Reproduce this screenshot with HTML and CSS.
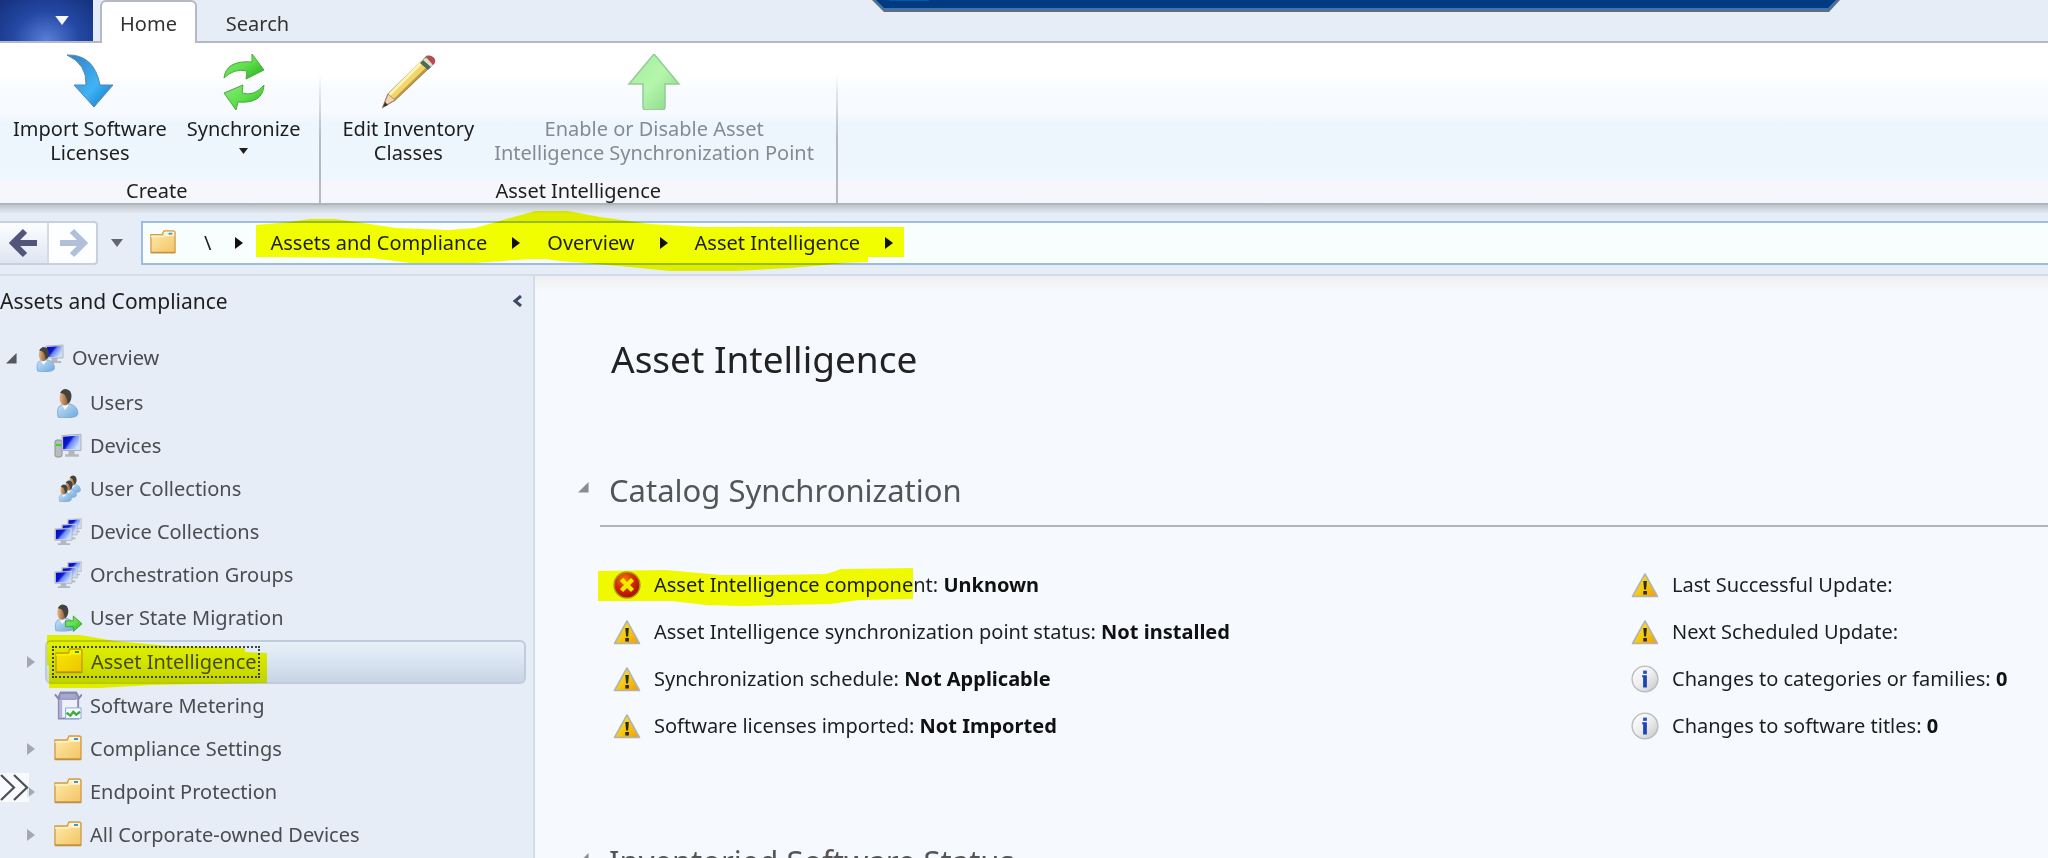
FILE: index.html
```html
<!DOCTYPE html>
<html lang="en">
<head>
<meta charset="utf-8">
<title>Asset Intelligence</title>
<meta name="viewport" content="width=device-width, initial-scale=1">
<link rel="stylesheet" href="styles.css">
</head>
<body>
<svg class="defs" width="0" height="0" aria-hidden="true">
  <defs>
    <linearGradient id="gBlue" x1="0" y1="0" x2="1" y2="1"><stop offset="0" stop-color="#2f7fc4"/><stop offset=".6" stop-color="#3fb4f4"/><stop offset="1" stop-color="#0d6fc4"/></linearGradient>
    <linearGradient id="gGreen" x1="0" y1="0" x2="1" y2="1"><stop offset="0" stop-color="#8ae87c"/><stop offset=".5" stop-color="#5fe04c"/><stop offset="1" stop-color="#25a81a"/></linearGradient>
    <linearGradient id="gPale" x1="0" y1="0" x2="1" y2="1"><stop offset="0" stop-color="#a4eca0"/><stop offset=".5" stop-color="#b4f6ac"/><stop offset="1" stop-color="#84d284"/></linearGradient>
    <linearGradient id="gFolder" x1="0" y1="0" x2="1" y2="1"><stop offset="0" stop-color="#ffebaa"/><stop offset="1" stop-color="#f3c466"/></linearGradient>
    <linearGradient id="gScreen" x1="0" y1="0" x2="1" y2=".6"><stop offset="0" stop-color="#0808a8"/><stop offset=".45" stop-color="#0a18d8"/><stop offset=".6" stop-color="#6c8cf4"/><stop offset="1" stop-color="#c8dcff"/></linearGradient>
    <linearGradient id="gBody" x1="0" y1="0" x2="1" y2="1"><stop offset="0" stop-color="#c8e2f8"/><stop offset="1" stop-color="#6ca6dc"/></linearGradient>
    <linearGradient id="gFace" x1="0" y1="0" x2="1" y2="0"><stop offset="0" stop-color="#e8b888"/><stop offset="1" stop-color="#7c4a28"/></linearGradient>
    <linearGradient id="gWarn" x1="0" y1="0" x2="1" y2="1"><stop offset="0" stop-color="#f8f020"/><stop offset=".5" stop-color="#f6cc14"/><stop offset="1" stop-color="#f09a08"/></linearGradient>
    <radialGradient id="gErr" cx=".4" cy=".3" r=".7"><stop offset="0" stop-color="#f88450"/><stop offset=".5" stop-color="#dc2c14"/><stop offset="1" stop-color="#b00c08"/></radialGradient>
    <linearGradient id="gInfo" x1="0" y1="0" x2="1" y2="1"><stop offset="0" stop-color="#ffffff"/><stop offset=".5" stop-color="#eeeeee"/><stop offset="1" stop-color="#c4c4c4"/></linearGradient>
    <symbol id="folder" viewBox="0 0 28 28">
      <path d="M1 5h12l2-4h10q2 0 2 2v21H1z" fill="url(#gFolder)" stroke="#cf9f4c" stroke-width="1.4"/>
      <path d="M15 2h11v4H15z" fill="#fff4d0"/><path d="M20 3h4v2h-4z" fill="#3c94dc"/>
      <path d="M1 7h13l2-1h10" fill="none" stroke="#fff3c4" stroke-width="1.4"/>
      <path d="M1 24.500h26" stroke="#bd8f45" stroke-width="1.500"/>
    </symbol>
    <symbol id="person" viewBox="0 0 28 30">
      <path d="M4 29Q2 18 8 17l8-1q8 2 8 10-1 3-7 3.500Q8 31 4 29z" fill="url(#gBody)" stroke="#7aa4cc" stroke-width=".8"/>
      <path d="M8 17l3 5 4-5z" fill="#f4faff"/>
      <ellipse cx="10.500" cy="10" rx="5" ry="7.500" fill="url(#gFace)"/>
      <path d="M6 5Q10-2 16 3q3 5 0 11l-2 2q-1-6-3-9-2-2-5-2z" fill="#444240"/>
    </symbol>
    <symbol id="monitor" viewBox="0 0 20 20" preserveAspectRatio="none">
      <path d="M7 14h6v3h4v2H4v-2h3z" fill="#b4b8bc"/>
      <path d="M1 2l18-1v13H1z" fill="#d8dce4" stroke="#a8acb8" stroke-width=".8"/>
      <path d="M2 3l15.500-1v11H2z" fill="url(#gScreen)"/>
    </symbol>
    <symbol id="overview" viewBox="0 0 28 28">
      <use href="#monitor" x="9" y="0" width="19" height="20"/><use href="#person" x="-2" y="2" width="24" height="26"/>
    </symbol>
    <symbol id="device" viewBox="0 0 28 28">
      <rect x="1" y="8" width="7" height="17" rx="2" fill="#b8bcbc" stroke="#8c9090"/><path d="M2 12h5v2H2z" fill="#34dc20"/>
      <use href="#monitor" x="7" y="1" width="21" height="25"/>
    </symbol>
    <symbol id="people" viewBox="0 0 28 28">
      <use href="#person" x="12" y="0" width="17" height="18"/><use href="#person" x="8" y="5" width="17" height="18"/><use href="#person" x="3" y="9" width="17" height="18"/>
    </symbol>
    <symbol id="devices" viewBox="0 0 28 28">
      <use href="#monitor" x="13" y="0" width="15" height="15"/><use href="#monitor" x="7" y="5" width="17" height="17"/><use href="#monitor" x="0" y="9" width="19" height="19"/>
    </symbol>
    <symbol id="migrate" viewBox="0 0 29 30">
      <use href="#person" x="-2" y="0" width="27" height="29"/>
      <path d="M12 18h8v-5l9 8-9 8v-5h-8z" fill="url(#gGreen)" stroke="#3ba832"/>
    </symbol>
    <symbol id="meter" viewBox="0 0 29 30">
      <path d="M5 5l2-4h16l2 4v23H5z" fill="#f0f0fa" stroke="#8c8cb8" stroke-width="2"/>
      <path d="M6 2h17v6H6z" fill="#a8a8cc" stroke="#8484b0"/><path d="M5 8L1 3M25 8l4-5" stroke="#8484b0" stroke-width="2"/>
      <path d="M7 9v18" stroke="#b4b4d8" stroke-width="3"/>
      <path d="M12 17h16v11H12z" fill="#f4faff" stroke="#88a8d4"/><path d="M13 22l4 3 3-4 3 3 4-3" fill="none" stroke="#44ac38" stroke-width="2.500"/>
    </symbol>
    <symbol id="warn" viewBox="0 0 28 26">
      <path d="M14 2L26.500 24.500h-25z" fill="url(#gWarn)" stroke="#b4b4ac" stroke-width="1.600" stroke-linejoin="round"/>
      <path d="M12.300 9h3.600l-.8 8.500h-2z" fill="#2c2a10"/><rect x="12.300" y="19" width="3.600" height="3.500" fill="#2c2a10"/>
    </symbol>
    <symbol id="error" viewBox="0 0 28 28">
      <circle cx="14" cy="14" r="13" fill="url(#gErr)" stroke="#b0a494" stroke-width="1.400"/>
      <path d="M8.500 8.500l11 11M19.500 8.500l-11 11" stroke="#f6ecec" stroke-width="4.400"/>
    </symbol>
    <symbol id="info" viewBox="0 0 30 30">
      <circle cx="15" cy="15" r="13.800" fill="url(#gInfo)" stroke="#bcbcbc" stroke-width="1.500"/>
      <rect x="13" y="6" width="4" height="3.500" fill="#2450c4"/><path d="M12 11h5v13h-4V13h-1z" fill="#1c44b8"/>
    </symbol>
    <symbol id="right" viewBox="0 0 8 14"><path d="M0 1l8 6-8 6z" fill="currentColor"/></symbol>
    <symbol id="down" viewBox="0 0 12 8"><path d="M0 0h12L6 8z" fill="currentColor"/></symbol>
    <symbol id="open" viewBox="0 0 12 12"><path d="M11.500 0v11.500H0z" fill="currentColor"/></symbol>
  </defs>
</svg>

<header class="tabs">
  <button class="app-menu" aria-label="Application menu"><svg width="14" height="9"><use href="#down"/></svg></button>
  <button class="tab tab-active">Home</button>
  <button class="tab">Search</button>
  <svg class="session-bar" width="968" height="13" viewBox="0 0 968 13" aria-hidden="true">
    <path d="M0 0h968l-11 12H12z" fill="#646c74"/><path d="M2 0h964l-9 10H12z" fill="#3c74b4"/><path d="M4 0h960l-8 8H12z" fill="#003a80"/><path d="M17 0h40v1H17z" fill="#0454a8"/>
  </svg>
</header>

<section class="ribbon" aria-label="Ribbon">
  <div class="group">
    <div class="group-tools">
      <button class="tool">
        <svg width="56" height="56" viewBox="0 0 56 56"><path d="M5 1Q32 0 38 31h13L32 53 12 31h12Q25 10 5 1z" fill="url(#gBlue)" stroke="#5a88ac" stroke-width="1"/></svg>
        <span>Import Software<br>Licenses</span>
      </button>
      <button class="tool">
        <svg width="56" height="56" viewBox="0 0 56 56"><path d="M8 24Q10 6 36 8V0l12 16-18 9 1-8Q18 14 8 24z" fill="url(#gGreen)" stroke="#49a93f" stroke-width="1"/><path d="M48 31Q47 50 22 48l-2 8L8 39l19-8-1 8q12 4 22-8z" fill="url(#gGreen)" stroke="#49a93f" stroke-width="1"/></svg>
        <span>Synchronize</span>
        <svg class="tool-caret" width="9" height="6"><use href="#down"/></svg>
      </button>
    </div>
    <div class="group-name">Create</div>
  </div>
  <div class="group group-wide">
    <div class="group-tools">
      <button class="tool">
        <svg width="56" height="56" viewBox="0 0 56 56"><path d="M3 53l5-13L47 2q8 0 7 7L15 46z" fill="#f2d66c" stroke="#8c7440" stroke-width="1.200"/><path d="M9 41L44 6" stroke="#fff6b0" stroke-width="3"/><path d="M14 46L50 11" stroke="#c49a40" stroke-width="2"/><path d="M3 53l5-13 7 6z" fill="#f4d4b0" stroke="#a07c58" stroke-width=".8"/><path d="M3 53l2-5 3 3z" fill="#333"/><path d="M40 9l4-4 8 7-4 4z" fill="#4c6c54"/><path d="M43 6l2-2 8 7-2 2z" fill="#d8e0d8"/><path d="M46 3q3-3 7 0t1 7l-1 1z" fill="#b8485c"/></svg>
        <span>Edit Inventory<br>Classes</span>
      </button>
      <button class="tool" disabled>
        <svg width="56" height="56" viewBox="0 0 56 56"><path d="M28 0L53 30H39v23q0 3-3 3H20q-3 0-3-3V30H3z" fill="url(#gPale)" stroke="#94cc94" stroke-width="1.500"/></svg>
        <span>Enable or Disable Asset<br>Intelligence Synchronization Point</span>
      </button>
    </div>
    <div class="group-name">Asset Intelligence</div>
  </div>
</section>

<nav class="address-row" aria-label="Address">
  <div class="history">
    <button aria-label="Back"><svg width="30" height="32" viewBox="0 0 30 32"><path d="M28 16H6M16 4L4 16l12 12" fill="none" stroke="#52567a" stroke-width="6"/></svg></button>
    <button aria-label="Forward"><svg width="30" height="32" viewBox="0 0 30 32"><path d="M2 16h22M14 4l12 12-12 12" fill="none" stroke="#b0c0d8" stroke-width="6"/></svg></button>
  </div>
  <button class="recent" aria-label="Recent locations"><svg width="12" height="8"><use href="#down"/></svg></button>
  <div class="address">
    <svg class="address-icon" width="26" height="26"><use href="#folder"/></svg>
    <span class="root">\</span>
    <svg class="sep" width="8" height="14"><use href="#right"/></svg>
    <a href="#">Assets and Compliance</a>
    <svg class="sep" width="8" height="14"><use href="#right"/></svg>
    <a href="#">Overview</a>
    <svg class="sep" width="8" height="14"><use href="#right"/></svg>
    <a href="#">Asset Intelligence</a>
    <svg class="sep" width="8" height="14"><use href="#right"/></svg>
  </div>
  <svg class="marker marker-address" width="648" height="62" viewBox="256 210 648 62" aria-hidden="true"><path d="M256 225L290 222 310 219H335L370 224 396 228 448 230 475 228 510 218 535 211H568L600 217 650 224 700 227H904V257H868V262L846 263 790 268 735 271H670L620 266 560 261 545 259H530L475 263H410L372 258 256 257z" fill="#f8ff00"/></svg>
</nav>

<div class="workspace">
  <aside class="sidebar">
    <div class="sidebar-head"><h2>Assets and Compliance</h2><button aria-label="Collapse pane"><svg width="10" height="12" viewBox="0 0 10 12"><path d="M9 1L3 6l6 5" fill="none" stroke="#3c4a66" stroke-width="3"/></svg></button></div>
    <ul class="tree">
      <li class="node node-root"><svg class="toggle toggle-open" width="11" height="11"><use href="#open"/></svg><a href="#"><svg width="28" height="28"><use href="#overview"/></svg>Overview</a></li>
      <li class="node"><a href="#"><svg width="28" height="30"><use href="#person"/></svg>Users</a></li>
      <li class="node"><a href="#"><svg width="28" height="28"><use href="#device"/></svg>Devices</a></li>
      <li class="node"><a href="#"><svg width="28" height="28"><use href="#people"/></svg>User Collections</a></li>
      <li class="node"><a href="#"><svg width="28" height="28"><use href="#devices"/></svg>Device Collections</a></li>
      <li class="node"><a href="#"><svg width="28" height="28"><use href="#devices"/></svg>Orchestration Groups</a></li>
      <li class="node"><a href="#"><svg width="28" height="30"><use href="#migrate"/></svg>User State Migration</a></li>
      <li class="node node-selected"><svg class="toggle" width="8" height="14"><use href="#right"/></svg><a href="#"><svg width="28" height="28"><use href="#folder"/></svg>Asset Intelligence</a>
        <svg class="marker marker-node" width="220" height="54" viewBox="47 633 220 54" aria-hidden="true"><path d="M47 634H80L115 640 170 645 245 647V651L267 652V682L200 683 150 684 100 687H49V665L47 664z" fill="#f8ff00"/></svg></li>
      <li class="node"><a href="#"><svg width="28" height="30"><use href="#meter"/></svg>Software Metering</a></li>
      <li class="node"><svg class="toggle" width="8" height="14"><use href="#right"/></svg><a href="#"><svg width="28" height="28"><use href="#folder"/></svg>Compliance Settings</a></li>
      <li class="node"><svg class="toggle" width="8" height="14"><use href="#right"/></svg><a href="#"><svg width="28" height="28"><use href="#folder"/></svg>Endpoint Protection</a>
        <button class="expander" aria-label="Expand"><svg width="29" height="29" viewBox="0 0 29 29"><path d="M1 2l13 12.500L1 27M14 2l13 12.500L14 27" fill="none" stroke="#4c5054" stroke-width="2.200"/></svg></button></li>
      <li class="node"><svg class="toggle" width="8" height="14"><use href="#right"/></svg><a href="#"><svg width="28" height="28"><use href="#folder"/></svg>All Corporate-owned Devices</a></li>
    </ul>
  </aside>

  <main class="content">
    <h1>Asset Intelligence</h1>
    <section class="panel">
      <h2><svg width="11" height="11"><use href="#open"/></svg>Catalog Synchronization</h2>
      <div class="status">
        <ul>
          <li><svg width="28" height="28"><use href="#error"/></svg><span>Asset Intelligence component: <b>Unknown</b></span>
            <svg class="marker marker-status" width="315" height="38" viewBox="597 568 315 38" aria-hidden="true"><path d="M597 571L665 570 720 575H770L825 574 840 569 912 568V599L857 600 830 604 740 606 705 605 670 601H597z" fill="#f8ff00"/></svg></li>
          <li><svg width="28" height="26"><use href="#warn"/></svg><span>Asset Intelligence synchronization point status: <b>Not installed</b></span></li>
          <li><svg width="28" height="26"><use href="#warn"/></svg><span>Synchronization schedule: <b>Not Applicable</b></span></li>
          <li><svg width="28" height="26"><use href="#warn"/></svg><span>Software licenses imported: <b>Not Imported</b></span></li>
        </ul>
        <ul>
          <li><svg width="28" height="26"><use href="#warn"/></svg><span>Last Successful Update:</span></li>
          <li><svg width="28" height="26"><use href="#warn"/></svg><span>Next Scheduled Update:</span></li>
          <li><svg width="28" height="30"><use href="#info"/></svg><span>Changes to categories or families: <b>0</b></span></li>
          <li><svg width="28" height="30"><use href="#info"/></svg><span>Changes to software titles: <b>0</b></span></li>
        </ul>
      </div>
    </section>
    <section class="panel">
      <h2><svg width="11" height="11"><use href="#open"/></svg>Inventoried Software Status</h2>
    </section>
  </main>
</div>
</body>
</html>
```

FILE: styles.css
```css
* { box-sizing: border-box; }

body {
  margin: 0;
  height: 100vh;
  overflow: hidden;
  display: flex;
  flex-direction: column;
  background: #e6edf7;
  color: #1e1e1e;
  font: 20px/24px "Noto Sans", "Open Sans", sans-serif;
}

button {
  margin: 0;
  padding: 0;
  border: 0;
  background: none;
  color: inherit;
  font: inherit;
}

a { color: inherit; text-decoration: none; }
ul { margin: 0; padding: 0; list-style: none; }
h1, h2 { margin: 0; font-weight: 400; }
svg { display: block; flex: none; }
.defs { position: absolute; }

/* Highlighter strokes tint whatever they lie over */
.marker {
  position: absolute;
  mix-blend-mode: multiply;
  pointer-events: none;
}

/* Tab strip */
.tabs {
  position: relative;
  flex: none;
  display: flex;
  height: 43px;
  border-bottom: 2px solid #b4b9c4;
}

.app-menu {
  width: 93px;
  margin-right: 7px;
  padding-left: 31px;
  display: flex;
  align-items: center;
  justify-content: center;
  background: radial-gradient(ellipse at 50% 100%, #5a80dc 0, #2448a4 50%, #14307c 100%);
  color: #f4f6fa;
}

.tab {
  width: 97px;
  height: 43px;
  padding-top: 4px;
  color: #333;
}

.tab + .tab { margin-left: 12px; }

.tab-active {
  border: 2px solid #b4b9c4;
  border-bottom: 0;
  border-radius: 6px 6px 0 0;
  background: #fff;
  padding-top: 2px;
}

.session-bar { position: absolute; left: 872px; top: 0; }

/* Ribbon */
.ribbon {
  flex: none;
  display: flex;
  height: 162px;
  border-bottom: 2px solid #b0b4b8;
  background: linear-gradient(#fff 20%, #f7faff 30%, #f7faff 44%, #eef6fd 50%, #eef6fe 84%, #f6f7fc 86%);
}

.group {
  display: flex;
  flex-direction: column;
  justify-content: space-between;
  padding: 11px 18px 0 13px;
  border-right: 2px solid;
  border-image: linear-gradient(transparent 20%, #b4bac0 60%) 1;
}

.group-wide { padding: 11px 22px 0; }

.group-tools { display: flex; gap: 20px; }

.tool {
  display: flex;
  flex-direction: column;
  align-items: center;
  gap: 7px;
}

.tool:disabled { color: #858a94; }
.group-name { text-align: center; }

/* Address row */
.address-row {
  position: relative;
  z-index: 1;
  flex: none;
  display: flex;
  height: 71px;
  padding: 16px 0 9px;
  border-bottom: 2px solid #d2dcea;
  background: linear-gradient(#c0c5cc, #e6edf7 9px);
}

.history {
  display: flex;
  width: 98px;
  border: 2px solid #c8d0dc;
  border-left: 0;
  border-radius: 0 4px 4px 0;
  background: #fdfeff;
}

.history button {
  flex: 1;
  display: flex;
  align-items: center;
  justify-content: center;
}

.history button:first-child {
  border-right: 2px solid #d4dae6;
  background: linear-gradient(#fcfdff, #dfe6f2);
}

.recent { padding: 0 18px 0 13px; color: #62666e; }

.address {
  flex: 1;
  display: flex;
  align-items: center;
  padding-left: 7px;
  border: 2px solid #9cbde0;
  border-right: 0;
  background: #f8fefe;
}

.root { margin: 0 24px 0 28px; }
.address a { margin: 0 25px 0 27px; }
.sep { color: #111; }
.marker-address { left: 256px; top: 5px; }

/* Workspace */
.workspace { flex: 1; min-height: 0; display: flex; }

.sidebar {
  flex: none;
  width: 535px;
  border-right: 2px solid #d2dde9;
}

.sidebar-head {
  display: flex;
  align-items: center;
  justify-content: space-between;
  height: 59px;
  padding: 0 11px 9px 0;
}

.sidebar-head h2 { font-size: 21px; line-height: 24px; }

.node {
  position: relative;
  display: flex;
  align-items: center;
  height: 43px;
  padding-left: 52px;
  color: #4a4c50;
}

.node a { display: flex; align-items: center; gap: 8px; padding: 2px; }
.node-root { height: 46px; padding-left: 34px; }
.toggle { position: absolute; left: 27px; color: #a4a8b0; }
.toggle-open { left: 6px; color: #55585e; }

.node-selected {
  height: 44px;
  margin: 1px 7px 0 45px;
  padding-left: 7px;
  border: 2px solid #c0cbdd;
  border-radius: 6px;
  background: linear-gradient(#e8f0f8, #dbe7f4 40%, #d3ddec 70%, #c8d4e4);
}

.node-selected a { padding: 0 1px; outline: 2px dotted #444; }
.node-selected .toggle { left: -20px; }
.marker-node { left: 0; top: -8px; }

.expander {
  position: absolute;
  left: 0;
  top: 3px;
  background: rgba(255, 255, 255, .7);
}

/* Main pane */
.content {
  flex: 1;
  min-width: 0;
  padding-left: 43px;
  background: linear-gradient(#eeefef, #f6faff 16px);
}

h1 {
  padding: 58px 0 0 33px;
  font-size: 37px;
  line-height: 50px;
  color: #222;
}

.panel h2 {
  display: flex;
  align-items: center;
  gap: 20px;
  font-size: 31px;
  line-height: 48px;
  color: #555;
}

.panel h2 svg { color: #8c8c8c; margin-bottom: 6px; }
.panel { padding-top: 82px; }
.panel + .panel { padding-top: 88px; }

.status {
  display: grid;
  grid-template-columns: 1018px 1fr;
  margin-left: 22px;
  padding: 34px 0 0 13px;
  border-top: 2px solid #b4b4b6;
}

.panel h2 + .status { margin-top: 11px; }

.status li {
  position: relative;
  display: flex;
  align-items: center;
  gap: 13px;
  height: 47px;
  white-space: nowrap;
}

.status b { color: #111; }
.marker-status { left: -15px; top: 7px; }
```
